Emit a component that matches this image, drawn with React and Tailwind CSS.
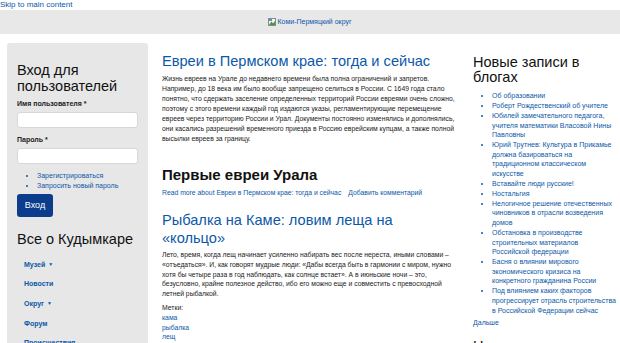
const blogPosts = [
  ['Об образовании'],
  ['Роберт Рождественский об учителе'],
  ['Юбилей замечательного педагога,', 'учителя математики Власовой Нины', 'Павловны'],
  ['Юрий Трутнев: Культура в Прикамье', 'должна базироваться на', 'традиционном классическом', 'искусстве'],
  ['Вставайте люди русские!'],
  ['Ностальгия'],
  ['Нелогичное решение отечественных', 'чиновников в отрасли возведения', 'домов'],
  ['Обстановка в производстве', 'строительных материалов', 'Российской федерации'],
  ['Басня о влиянии мирового', 'экономического кризиса на', 'конкретного гражданина России'],
  ['Под влиянием каких факторов', 'прогрессирует отрасль строительства', 'в Российской Федерации сейчас'],
];

const navItems = [
  { label: 'Музей', caret: true },
  { label: 'Новости' },
  { label: 'Округ', caret: true },
  { label: 'Форум' },
  { label: 'Происшествия' },
];

const BrokenImage = () => (
  <svg width="8" height="8" viewBox="0 0 8 8" className="mr-[1px] shrink-0">
    <rect x="0.5" y="0.5" width="7" height="7" fill="#f4f4f4" stroke="#8a8a8a" strokeWidth="1" />
    <path d="M1 7 L3.5 3.5 L5 5.5 L7 3 L7 7 Z" fill="#3a9a3a" />
    <rect x="1" y="1" width="3" height="2" fill="#5b8fd6" />
  </svg>
);

const App = () => {
  return (
    <div className="min-h-screen bg-white text-[#222] font-['Liberation_Sans',Arial,sans-serif] overflow-hidden">
      <a href="#main" className="block text-[8px] leading-[10px] text-[#0b58a8]">Skip to main content</a>

      <header className="h-[24px] bg-[#e8e8e8] flex items-center justify-center">
        <div className="flex items-center text-[7px] text-[#0b58a8]">
          <BrokenImage />
          <span>Коми-Пермяцкий округ</span>
        </div>
      </header>

      <div className="flex mt-[9px]">
        {/* left sidebar */}
        <aside className="ml-[7px] w-[141px] shrink-0 bg-[#e7e7e7] rounded-t-[3px] px-[10px] pt-[19px] pb-[20px]">
          <h2 className="text-[14.5px] leading-[16px] text-[#111]">Вход для пользователей</h2>
          <label className="block mt-[5px] text-[7px] leading-[9px] font-bold">Имя пользователя *</label>
          <div className="mt-[4px] h-[16px] bg-white rounded-[3px] border border-[#d8d8d8]" />
          <label className="block mt-[7px] text-[7px] leading-[9px] font-bold">Пароль *</label>
          <div className="mt-[4px] h-[16px] bg-white rounded-[3px] border border-[#d8d8d8]" />
          <ul className="mt-[7px] pl-[20px] list-disc text-[7px] leading-[10px] text-[#0b58a8]">
            <li>Зарегистрироваться</li>
            <li>Запросить новый пароль</li>
          </ul>
          <button className="mt-[3px] w-[36px] h-[23px] bg-[#0b3d8c] rounded-[3px] text-white text-[9px]">Вход</button>
          <h2 className="mt-[13px] text-[14.5px] leading-[18px] text-[#111]">Все о Кудымкаре</h2>
          <nav className="mt-[7px] flex flex-col pl-[7px] text-[7px] font-bold text-[#0b58a8]">
            {navItems.map((item) => (
              <div key={item.label} className="h-[19.6px] flex items-center">
                <span>{item.label}</span>
                {item.caret && <span className="ml-[3px] text-[5px]">▼</span>}
              </div>
            ))}
          </nav>
        </aside>

        {/* main column */}
        <main id="main" className="ml-[14px] w-[296px] shrink-0 pt-[9px]">
          <h1 className="text-[14.6px] leading-[18px] text-[#0b58a8]">Евреи в Пермском крае: тогда и сейчас</h1>
          <p className="mt-[4px] text-[6.8px] leading-[10px]">
            Жизнь евреев на Урале до недавнего времени была полна ограничений и запретов. Например, до 18 века им было вообще запрещено селиться в России. С 1649 года стало понятно, что сдержать заселение определенных территорий России евреями очень сложно, поэтому с этого времени каждый год издаются указы, регламентирующие перемещение евреев через территорию России и Урал. Документы постоянно изменялись и дополнялись, они касались разрешений временного приезда в Россию еврейским купцам, а также полной высылки евреев за границу.
          </p>
          <h2 className="mt-[23px] text-[15px] leading-[16px] font-bold text-[#111]">Первые евреи Урала</h2>
          <div className="mt-[5px] flex gap-[7px] text-[6.8px] leading-[10px] text-[#0b58a8]">
            <span>Read more about Евреи в Пермском крае: тогда и сейчас</span>
            <span>Добавить комментарий</span>
          </div>
          <h1 className="mt-[13px] text-[14.6px] leading-[18px] text-[#0b58a8]">Рыбалка на Каме: ловим леща на «кольцо»</h1>
          <p className="mt-[3px] text-[6.8px] leading-[9.8px]">
            Лето, время, когда лещ начинает усиленно набирать вес после нереста, иными словами – «отъедаться». И, как говорят мудрые люди: «Дабы всегда быть в гармонии с миром, нужно хотя бы четыре раза в год наблюдать, как солнце встает». А в июньские ночи – это, безусловно, крайне полезное действо, ибо его можно еще и совместить с превосходной летней рыбалкой.
          </p>
          <div className="mt-[4px] text-[6.8px] leading-[9.8px]">
            <div>Метки:</div>
            <div className="text-[#0b58a8]">кама</div>
            <div className="text-[#0b58a8]">рыбалка</div>
            <div className="text-[#0b58a8]">лещ</div>
            <div className="flex gap-[7px] text-[#0b58a8]">
              <span>Read more about Рыбалка на Каме: ловим леща на «кольцо»</span>
              <span>Добавить комментарий</span>
            </div>
          </div>
        </main>

        {/* right column */}
        <aside className="ml-[15px] w-[145px] shrink-0 pt-[12px]">
          <h2 className="text-[14.5px] leading-[15px] text-[#111]">Новые записи в блогах</h2>
          <ul className="mt-[6px] pl-[19px] list-disc text-[7px] leading-[9.6px] text-[#0b58a8] flex flex-col gap-[0.4px]">
            {blogPosts.map((lines) => (
              <li key={lines[0]} className="whitespace-nowrap">
                {lines.map((line, i) => (
                  <span key={i} className="block first:inline">{line}</span>
                ))}
              </li>
            ))}
          </ul>
          <div className="mt-[3px] text-[7px] leading-[10px] text-[#0b58a8]">Дальше</div>
          <h2 className="mt-[11px] text-[14.5px] leading-[15px] text-[#111]">Новые комментарии</h2>
        </aside>
      </div>
    </div>
  );
};

export default App;
